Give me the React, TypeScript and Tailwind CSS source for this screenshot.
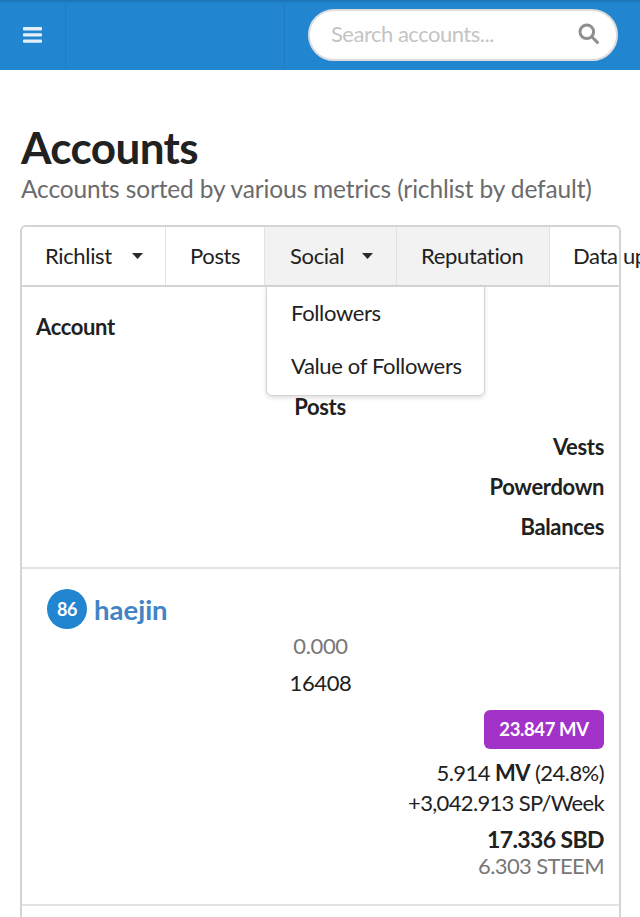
import React from "react";

const Caret = ({ gap }: { gap: string }) => (
  <svg width="11" height="6" viewBox="0 0 11 6" className={`${gap} mt-[1px]`}>
    <path d="M0 0h11L5.5 6z" fill="#2a2a2a" />
  </svg>
);

const Tab = ({ children, active, gap, w, pad }: { children: React.ReactNode; active?: boolean; gap?: string; w: string; pad: string }) => (
  <div className={`flex h-full shrink-0 items-center border-r border-[#e2e2e3] pb-[1px] ${pad} ${w} ${active ? "bg-[#f2f2f2]" : ""}`}>
    <span className="whitespace-nowrap">{children}</span>
    {gap && <Caret gap={gap} />}
  </div>
);

export default function App() {
  return (
    <div className="h-[917px] w-[640px] overflow-hidden bg-white text-[22px] leading-[31px] tracking-[-0.35px] text-[#212121]" style={{ fontFamily: "Lato, sans-serif" }}>
      <header className="flex h-[70px] bg-[#2185d0] shadow-[inset_0_3px_3px_-2px_rgba(0,0,0,0.18)]">
        <div className="flex w-[66px] items-center justify-center border-r border-[#1f7cc2]">
          <svg width="19" height="16" viewBox="0 0 19 16" className="mb-[1px]">
            <rect y="0" width="19" height="3.4" rx="1" fill="#e3f0fa" />
            <rect y="6.2" width="19" height="3.4" rx="1" fill="#e3f0fa" />
            <rect y="12.4" width="19" height="3.4" rx="1" fill="#e3f0fa" />
          </svg>
        </div>
        <div className="w-[219px] border-r border-[#1f7cc2]" />
        <div className="flex flex-1 items-start pl-[23px] pt-[9px]">
          <div className="flex h-[52px] w-[310px] items-center justify-between rounded-[26px] border-2 border-[#dcdcdc] bg-white pb-[4px] pl-[21px] pr-[17px]">
            <span className="tracking-[-0.5px] text-[#c4c4c4]">Search accounts...</span>
            <svg width="21" height="21" viewBox="0 0 21 21" fill="none" stroke="#8f8f8f" strokeWidth="3">
              <circle cx="8.8" cy="8.8" r="6.8" />
              <path d="M13.8 13.8l5.6 5.6" strokeLinecap="round" />
            </svg>
          </div>
        </div>
      </header>

      <main className="px-[20px]">
        <h1 className="mt-[52px] pl-[1px] text-[44px] font-bold leading-[50px] tracking-[-0.6px] text-[#212121]">Accounts</h1>
        <p className="mt-[1px] pl-[1px] text-[24.5px] leading-[32px] tracking-[-0.14px] text-[#6b6b6b]">Accounts sorted by various metrics (richlist by default)</p>

        <div className="relative mt-[20px] w-[601px]">
          <nav className="flex h-[62px] items-center rounded-t-[6px] border-2 border-[#d4d4d5] bg-white">
            <Tab w="w-[144px]" pad="pl-[23px]" gap="ml-[20px]">Richlist</Tab>
            <Tab w="w-[99px]" pad="pl-[24px]">Posts</Tab>
            <Tab w="w-[132px]" pad="pl-[25px]" active gap="ml-[18px]">Social</Tab>
            <Tab w="w-[153px]" pad="pl-[24px]" active>Reputation</Tab>
            <div className="flex h-full items-center whitespace-nowrap pb-[1px] pl-[23px]">Data updated</div>
          </nav>

          <div className="border-x-2 border-[#d4d4d5]">
            <div className="border-b-2 border-[#e3e3e3] pb-[21px] pl-[14px] pr-[15px] pt-[20px] font-bold leading-[40px]">
              <div className="h-[40px]">Account</div>
              <div className="h-[40px]" />
              <div className="h-[40px] text-center">Posts</div>
              <div className="h-[40px] text-right">Vests</div>
              <div className="h-[40px] text-right">Powerdown</div>
              <div className="h-[39px] text-right">Balances</div>
            </div>

            <div className="px-[15px] pt-[20px]">
              <div className="flex h-[40px] items-center pl-[10px]">
                <span className="flex size-[40px] items-center justify-center rounded-full bg-[#2185d0] text-[18px] font-bold text-white">86</span>
                <a className="ml-[7px] text-[27.5px] font-bold tracking-[0px] text-[#4183c4]">haejin</a>
              </div>
              <div className="h-[33px] text-center leading-[33px] text-[#777777]">0.000</div>
              <div className="mt-[2px] h-[37px] text-center leading-[37px]">16408</div>
              <div className="mt-[9px] flex justify-end">
                <span className="flex h-[39px] w-[120px] items-center justify-center rounded-[6px] bg-[#a333c8] text-[18.5px] font-bold tracking-[-0.4px] text-white">23.847 MV</span>
              </div>
              <div className="mt-[9px] text-right leading-[30px] tracking-[-0.56px]">5.914 <b>MV</b> (24.8%)</div>
              <div className="text-right leading-[30px] tracking-[-0.67px]">+3,042.913 SP/Week</div>
              <div className="mt-[6px] text-right text-[23px] font-bold leading-[30px] tracking-[-0.6px]">17.336 SBD</div>
              <div className="text-right leading-[24px] tracking-[-0.6px] text-[#777777]">6.303 STEEM</div>
            </div>
            <div className="mt-[26px] h-[60px] border-t-2 border-[#e3e3e3]" />
          </div>

          <div className="absolute left-[246px] top-[61px] w-[219px] rounded-b-[6px] border border-[#d4d4d5] bg-white pt-[10px] shadow-[0_2px_4px_rgba(34,36,38,0.15)]">
            <div className="h-[53px] pl-[24px] leading-[31px]">Followers</div>
            <div className="h-[45px] pl-[24px] leading-[31px]">Value of Followers</div>
          </div>
        </div>
      </main>
    </div>
  );
}
